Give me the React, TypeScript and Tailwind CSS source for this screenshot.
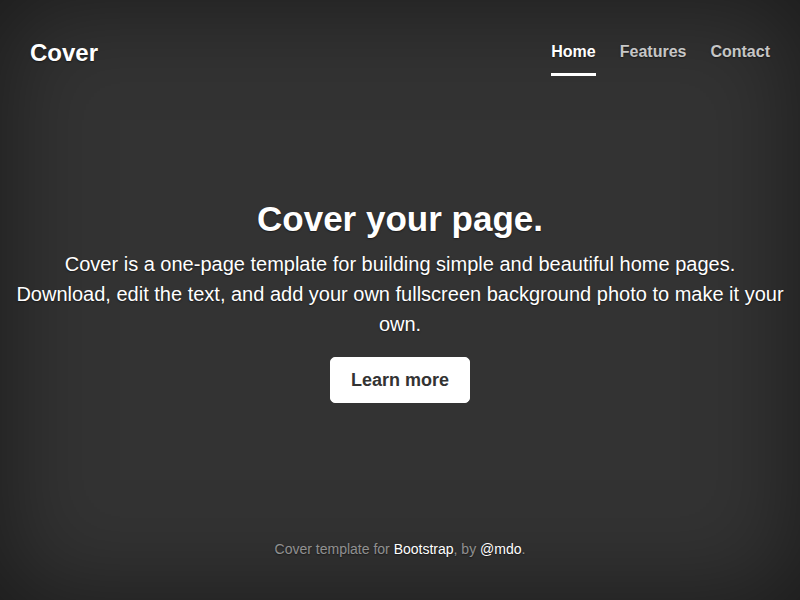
import React from "react";

const navItems = [
  { label: "Home", active: true },
  { label: "Features", active: false },
  { label: "Contact", active: false },
];

const App: React.FC = () => {
  return (
    <div
      className="flex h-screen w-full flex-col bg-[#333] text-white shadow-[inset_0_0_100px_rgba(0,0,0,0.5)] [text-shadow:0_0.05rem_0.1rem_rgba(0,0,0,0.5)]"
      style={{ fontFamily: '"Liberation Sans", Arial, sans-serif' }}
    >
      {/* Header */}
      <header className="flex items-start justify-between px-[30px] pt-[36px]">
        <h3 className="text-[24px] font-bold leading-[34px]">Cover</h3>
        <nav className="flex gap-6 pt-[6px]">
          {navItems.map((item) => (
            <a
              key={item.label}
              href="#"
              className={
                item.active
                  ? "border-b-[3px] border-white pb-[11px] text-[16px] font-bold leading-[20px] text-white"
                  : "border-b-[3px] border-transparent pb-[11px] text-[16px] font-bold leading-[20px] text-white/75"
              }
            >
              {item.label}
            </a>
          ))}
        </nav>
      </header>

      {/* Main */}
      <main className="flex flex-1 flex-col items-center justify-center px-4 pb-[14px] text-center">
        <h1 className="mb-[9px] text-[35px] font-bold leading-[42px]">Cover your page.</h1>
        <p className="text-[20px] font-light leading-[30px]">
          Cover is a one-page template for building simple and beautiful home pages.
          Download, edit the text, and add your own fullscreen background photo to make it your own.
        </p>
        <a
          href="#"
          className="mt-[18px] rounded-[5px] border border-white bg-white px-[20px] py-[8px] text-[18px] font-bold leading-[28px] text-[#333] [text-shadow:none]"
        >
          Learn more
        </a>
      </main>

      {/* Footer */}
      <footer className="pb-[41px] text-center text-[14px] leading-[20px] text-white/50">
        Cover template for <a href="#" className="text-white">Bootstrap</a>, by{" "}
        <a href="#" className="text-white">@mdo</a>.
      </footer>
    </div>
  );
};

export default App;
